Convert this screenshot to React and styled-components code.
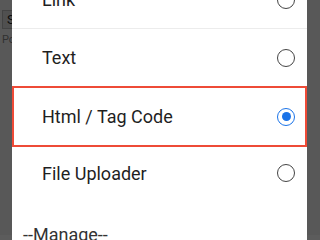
import styled, { createGlobalStyle } from 'styled-components';

const options = [
  { id: 'link', label: 'Link' },
  { id: 'text', label: 'Text' },
  { id: 'html', label: 'Html / Tag Code', selected: true },
  { id: 'file', label: 'File Uploader', last: true },
];

export default function App() {
  return (
    <>
      <GlobalStyle />
      <Page>
        <SearchBox>Search</SearchBox>
        <PageText>Posts</PageText>
      </Page>
      <Overlay>
        <Dialog>
          {options.map((opt) => (
            <OptionRow key={opt.id} $selected={opt.selected} $last={opt.last}>
              <OptionLabel>{opt.label}</OptionLabel>
              <Radio $checked={opt.selected} />
            </OptionRow>
          ))}
          <GroupHeader>--Manage--</GroupHeader>
        </Dialog>
      </Overlay>
    </>
  );
}

const GlobalStyle = createGlobalStyle`
  html, body {
    margin: 0;
    padding: 0;
    overflow: hidden;
    font-family: Roboto, "Noto Sans", sans-serif;
  }
`;

const Page = styled.div`
  width: 320px;
  height: 235px;
  background-color: #f4f4f4;
  padding: 10px 0 0 2px;
  box-sizing: border-box;
`;

const SearchBox = styled.div`
  width: 120px;
  height: 17px;
  border: 1px solid #bbb;
  background-color: #ddd;
  padding-left: 4px;
  font-size: 13px;
  line-height: 17px;
  color: #222;
`;

const PageText = styled.div`
  margin-top: 4px;
  font-size: 11px;
  color: #888;
`;

const Overlay = styled.div`
  position: fixed;
  inset: 0;
  background-color: rgba(0, 0, 0, 0.64);
`;

const Dialog = styled.div`
  position: absolute;
  top: -29px;
  left: 12px;
  width: 295px;
  background-color: #ffffff;
  display: flex;
  flex-direction: column;
`;

const OptionRow = styled.div`
  height: ${(p) => (p.$last ? '52px' : '58px')};
  display: flex;
  align-items: center;
  justify-content: space-between;
  padding: 0 12px 0 30px;
  box-sizing: border-box;
  border-bottom: ${(p) => (p.$last ? 'none' : '1px solid #ececec')};
  ${(p) =>
    p.$selected &&
    `
    border: 2px solid #ee4b37;
    margin-top: -1px;
    height: 61px;
    padding: 0 10px 0 28px;
  `}
`;

const OptionLabel = styled.span`
  font-size: 18px;
  color: #1f1f1f;
`;

const Radio = styled.span`
  width: 18px;
  height: 18px;
  border-radius: 50%;
  box-sizing: border-box;
  border: 1.8px solid ${(p) => (p.$checked ? '#1a73e8' : '#444')};
  display: flex;
  align-items: center;
  justify-content: center;
  &::after {
    content: '';
    display: ${(p) => (p.$checked ? 'block' : 'none')};
    width: 9px;
    height: 9px;
    border-radius: 50%;
    background-color: #1a73e8;
  }
`;

const GroupHeader = styled.div`
  padding: 25px 0 0 11px;
  font-size: 18px;
  color: #333;
`;
